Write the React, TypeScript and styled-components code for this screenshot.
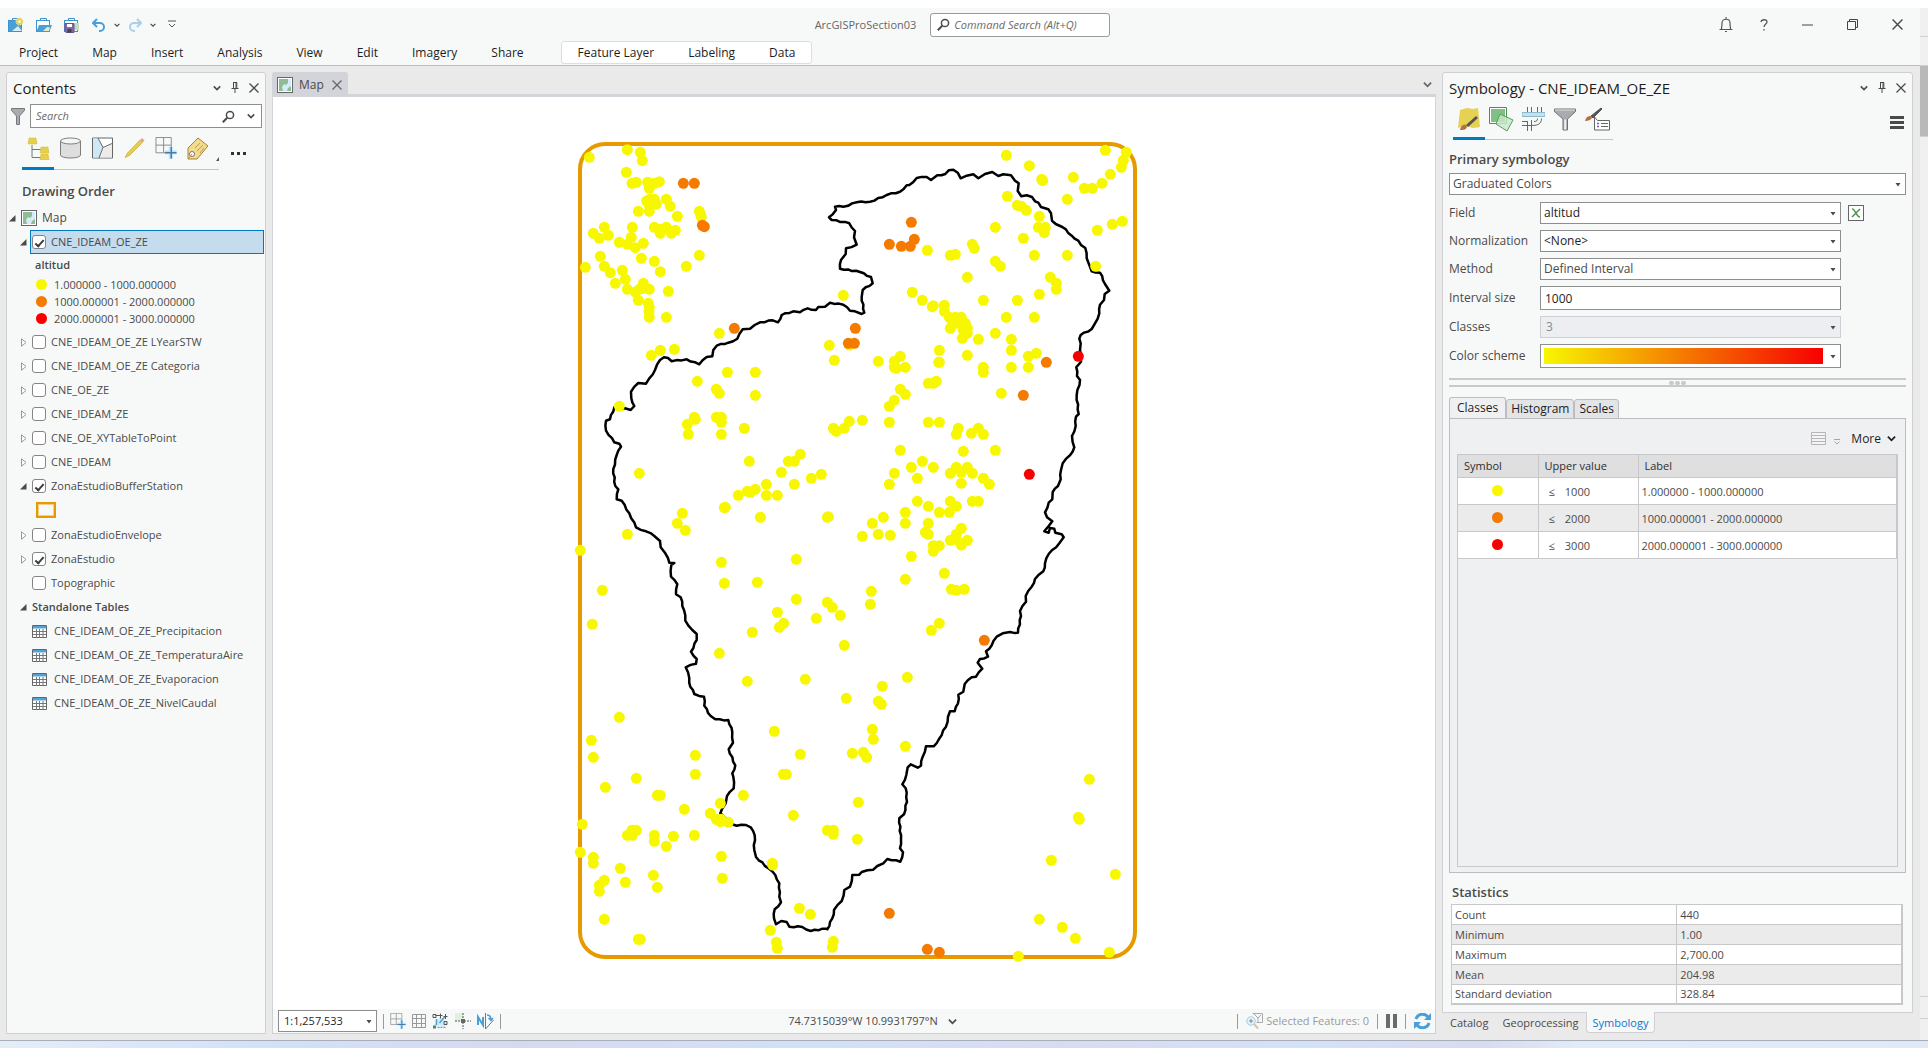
import React from "react";
import styled, { createGlobalStyle, css } from "styled-components";

const ink = "#4a4a4a";
const line = "#c8c8ca";
const panelBg = "#f7f9f8";
const blue = "#0079c1";

const GlobalStyle = createGlobalStyle`
  *, *::before, *::after { box-sizing: border-box; }
  body {
    margin: 0;
    background: #ffffff;
    color: ${ink};
    font: 12px/16px "Segoe UI", "Open Sans", "Noto Sans", sans-serif;
  }
  button, input, select { font: inherit; color: inherit; margin: 0; }
  button { background: none; border: 0; padding: 0; white-space: nowrap; }
  svg { display: block; flex: none; }
`;

/* ---------- frame ---------- */

const Page = styled.div`
  display: flex;
  flex-direction: column;
  height: 100vh;
  padding-top: 8px;
`;
const Screen = styled.div`
  flex: 1;
  min-height: 0;
  display: flex;
`;
const AppWindow = styled.div`
  flex: 1;
  min-width: 0;
  display: flex;
  flex-direction: column;
  background: #eaeaea;
`;
const Desktop = styled.div`
  height: 8px;
  border-top: 1px solid #a9adb8;
  background: linear-gradient(90deg, #e4eef8, #d2e0fa 14%, #d6daf0 27%, #d2e0fa 42%, #d8dcf2 55%, #d3e1f9 68%, #d8dbf0 77%, #e0ecf8 82%, #dfe9f8);
`;
const Behind = styled.div`
  width: 8px;
  display: flex;
  flex-direction: column;
  background: #f0f0f1;
`;
const BehindPart = styled.div<{ $h: number; $dark?: boolean }>`
  height: ${(p) => p.$h}px;
  border-bottom: 1px solid #d0d0d0;
  background: ${(p) => (p.$dark ? "#b9b9b9" : "#f0f0f1")};
`;
const TitleBar = styled.header`
  display: grid;
  grid-template-columns: 1fr auto 1fr;
  align-items: center;
  height: 33px;
  padding: 0 17px 0 8px;
  background: ${panelBg};
`;
const Cluster = styled.div<{ $gap: number; $end?: boolean; $lead?: number; $small?: boolean }>`
  display: flex;
  align-items: center;
  gap: ${(p) => p.$gap}px;
  padding-left: ${(p) => p.$lead ?? 0}px;
  font-size: ${(p) => (p.$small ? 11 : 12)}px;
  justify-content: ${(p) => (p.$end ? "flex-end" : "flex-start")};
`;
const ProjectName = styled.span`
  color: #666666;
`;
const CommandBox = styled.label`
  display: flex;
  align-items: center;
  gap: 4px;
  width: 180px;
  height: 24px;
  padding: 0 6px;
  background: #ffffff;
  border: 1px solid #9a9a9a;
  border-radius: 3px;
`;
const PlainInput = styled.input`
  flex: 1;
  min-width: 0;
  border: 0;
  padding: 0;
  background: transparent;
  &::placeholder { color: #6a6a6a; font-style: italic; opacity: 1; }
`;
const Ribbon = styled.nav`
  display: flex;
  height: 25px;
  padding-left: 19px;
  gap: 34px;
  background: ${panelBg};
  border-bottom: 1px solid #bdbdbd;
  color: #1e1e1e;
`;
const ContextTabs = styled.div`
  display: flex;
  gap: 34px;
  height: 23px;
  margin-left: 3px;
  padding: 0 16px;
  background: #ffffff;
  border: 1px solid #dedede;
  border-radius: 3px;
`;
const Workspace = styled.main`
  flex: 1;
  min-height: 0;
  display: flex;
  gap: 6px;
  padding: 6px 7px 6px 6px;
`;
const Column = styled.div<{ $w: number }>`
  width: ${(p) => p.$w}px;
  flex: none;
  display: flex;
  flex-direction: column;
`;
const Panel = styled.section`
  flex: 1;
  min-height: 0;
  display: flex;
  flex-direction: column;
  background: ${panelBg};
  border: 1px solid #d0d0d4;
  border-radius: 3px 3px 0 0;
`;
const PanelHead = styled.div`
  display: flex;
  align-items: center;
  height: 31px;
  padding: 0 6px 2px;
`;
const PanelTitle = styled.h2`
  flex: 1;
  margin: 0;
  font-size: 15px;
  line-height: 20px;
  font-weight: 400;
  color: #1e1e1e;
`;

/* ---------- contents ---------- */

const SearchRow = styled.div`
  display: flex;
  align-items: center;
  gap: 5px;
  padding: 0 3px 0 4px;
`;
const SearchBox = styled.label`
  flex: 1;
  min-width: 0;
  display: flex;
  align-items: center;
  gap: 12px;
  height: 24px;
  padding: 0 6px 0 5px;
  background: #ffffff;
  border: 1px solid #8e8e8e;
  font-size: 11px;
`;
const ToolStrip = styled.div<{ $top: number; $left: number; $w: number; $n: number }>`
  display: grid;
  grid-template-columns: repeat(${(p) => p.$n}, ${(p) => p.$w}px) auto;
  width: fit-content;
  margin: ${(p) => p.$top}px 0 0 ${(p) => p.$left}px;
`;
const Tool = styled.button<{ $on?: boolean }>`
  display: flex;
  justify-content: center;
  height: 33px;
  border-bottom: ${(p) => (p.$on ? `3px solid ${blue}` : "1px solid #c4c4c4")};
`;
const SectionTitle = styled.h3<{ $pad: string }>`
  margin: 0;
  padding: ${(p) => p.$pad};
  font-size: 13px;
  line-height: 18px;
  font-weight: 600;
`;
const TreeRow = styled.div<{ $indent: number; $gap: number }>`
  display: flex;
  align-items: center;
  height: 24px;
  margin-right: 1px;
  padding-left: ${(p) => p.$indent}px;
  gap: ${(p) => p.$gap}px;
`;
const TreeLabel = styled.label<{ $on?: boolean }>`
  flex: 1;
  display: flex;
  align-items: center;
  gap: 5px;
  height: 24px;
  padding: 0 1px;
  border: 1px solid ${(p) => (p.$on ? blue : "transparent")};
  background: ${(p) => (p.$on ? "#c5dbee" : "transparent")};
  font-size: 11px;
  white-space: nowrap;
`;
const Check = styled.input`
  appearance: none;
  flex: none;
  display: grid;
  place-items: center;
  width: 14px;
  height: 14px;
  background: #ffffff;
  border: 1px solid #858585;
  border-radius: 3px;
  &:checked::after {
    content: "";
    width: 9px;
    height: 5px;
    border: solid #3c3c3c;
    border-width: 0 0 2px 2px;
    transform: rotate(-48deg);
  }
`;
const FieldName = styled.div`
  padding: 3px 0 3px 28px;
  font-size: 11px;
  font-weight: 600;
`;
const Legend = styled.ul`
  list-style: none;
  margin: 0 0 3px;
  padding: 0 0 0 29px;
  font-size: 11px;
`;
const LegendItem = styled.li`
  display: flex;
  align-items: center;
  gap: 7px;
  height: 17px;
`;
const Dot = styled.i<{ $c: string }>`
  display: block;
  width: 11px;
  height: 11px;
  border-radius: 50%;
  background: ${(p) => p.$c};
`;
const PatchRow = styled.div`
  height: 25px;
  padding: 4px 0 0 29px;
`;
const Patch = styled.div`
  width: 20px;
  height: 16px;
  border: 2px solid #e69a00;
  outline: 1px solid #f3cf8a;
  outline-offset: -3px;
`;
const TableRow = styled.div`
  display: flex;
  align-items: center;
  gap: 7px;
  height: 24px;
  padding-left: 25px;
  font-size: 11px;
  white-space: nowrap;
`;
const GroupName = styled.span`
  font-size: 11px;
  font-weight: 600;
`;

/* ---------- map view ---------- */

const MapColumn = styled.section`
  flex: 1;
  min-width: 0;
  display: flex;
  flex-direction: column;
`;
const DocTabs = styled.div`
  display: flex;
  align-items: flex-start;
  justify-content: space-between;
  height: 25px;
  padding-right: 4px;
  border-bottom: 3px solid #d3d3da;
`;
const DocTab = styled.div`
  display: flex;
  align-items: center;
  gap: 6px;
  height: 25px;
  padding: 0 6px 0 5px;
  background: #d3d3da;
  border-radius: 3px 3px 0 0;
`;
const TabClose = styled.button`
  padding-left: 2px;
`;
const ChevronHolder = styled.div`
  padding-top: 8px;
`;
const Canvas = styled.div`
  flex: 1;
  min-height: 0;
  background: #ffffff;
  border: solid #d3d3da;
  border-width: 0 1px;
  & > svg { width: 100%; height: 100%; }
`;
const StatusBar = styled.div`
  display: grid;
  grid-template-columns: 1fr auto 1fr;
  align-items: center;
  height: 25px;
  padding: 0 4px 0 5px;
  background: ${panelBg};
  border: 1px solid #cfcfd2;
  border-top: 0;
`;
const Rule = styled.i`
  width: 1px;
  height: 15px;
  background: #9a9a9a;
`;
const Muted = styled.button`
  display: flex;
  align-items: center;
  gap: 3px;
  color: #9a9a9a;
`;

/* ---------- symbology ---------- */

const Picker = styled.div<{ $w?: number; $h?: number; $off?: boolean }>`
  display: grid;
  align-items: center;
  width: ${(p) => (p.$w ? `${p.$w}px` : "100%")};
  height: ${(p) => p.$h ?? 22}px;
  background: ${(p) => (p.$off ? "#edeef1" : "#ffffff")};
  border: 1px solid ${(p) => (p.$off ? "#cfcfd6" : "#8e8e8e")};
  & > * { grid-area: 1 / 1; }
  & > svg { justify-self: end; margin-right: 4px; pointer-events: none; }
`;
const Select = styled.select<{ $dark?: boolean }>`
  appearance: none;
  width: 100%;
  height: 18px;
  border: 0;
  padding: 0 16px 0 3px;
  background: transparent;
  color: ${(p) => (p.$dark ? "#1e1e1e" : ink)};
  opacity: 1;
  &:disabled { color: #8a8a8a; padding-left: 5px; }
`;
const ScaleSelect = styled(Select)`
  padding-left: 5px;
`;
const Ramp = styled.select`
  appearance: none;
  width: auto;
  height: 16px;
  margin: 0 17px 0 3px;
  border: 0;
  background: linear-gradient(90deg, #f7f700, #f57a00 50%, #f70000);
`;
const NumberBox = styled.input`
  height: 24px;
  padding: 0 4px;
  background: #ffffff;
  border: 1px solid #8e8e8e;
  color: #1e1e1e;
`;
const Body = styled.div`
  flex: 1;
  min-height: 0;
  display: flex;
  flex-direction: column;
  padding: 0 6px;
`;
const ToolLine = styled.div`
  display: flex;
  align-items: center;
  justify-content: space-between;
  padding: 0 2px 0 4px;
`;
const Fields = styled.div`
  display: grid;
  grid-template-columns: 84px 301px auto;
  grid-template-rows: 22px 22px 22px 24px 22px 24px;
  column-gap: 7px;
  row-gap: 6px;
  align-items: center;
  padding-top: 7px;
`;
const FieldLabel = styled.label`
  grid-column: 1;
  white-space: nowrap;
`;
const Expression = styled.button`
  width: 16px;
  height: 16px;
  background: #ffffff;
  border: 1px solid #666666;
`;
const Splitter = styled.div`
  display: flex;
  align-items: center;
  justify-content: center;
  gap: 1px;
  height: 9px;
  flex: none;
  margin: 10px 0;
  border: solid #c9c9c9;
  border-width: 2px 0;
`;
const Grip = styled.i`
  width: 5px;
  height: 4px;
  border-radius: 2px;
  background: #c9c9c9;
`;
const Tabs = styled.div`
  display: flex;
  align-items: flex-end;
  height: 22px;
  flex: none;
  margin-bottom: -1px;
`;
const Tab = styled.button<{ $on?: boolean }>`
  height: ${(p) => (p.$on ? 22 : 20)}px;
  padding: 0 ${(p) => (p.$on ? 7 : 4)}px;
  color: #1e1e1e;
  background: ${(p) => (p.$on ? "#eff0f2" : "#e3e4e6")};
  border: 1px solid #bcbcc2;
  border-bottom-color: ${(p) => (p.$on ? "#eff0f2" : "#bcbcc2")};
  border-radius: 3px 3px 0 0;
`;
const TabPage = styled.div`
  flex: 1;
  min-height: 0;
  display: flex;
  flex-direction: column;
  padding: 0 7px 5px;
  background: #eff0f2;
  border: 1px solid #bcbcc2;
`;
const MoreRow = styled.div`
  display: flex;
  align-items: center;
  justify-content: flex-end;
  gap: 8px;
  height: 35px;
  flex: none;
  padding: 4px 2px 0 0;
`;
const MoreButton = styled.button`
  display: flex;
  align-items: center;
  gap: 6px;
  margin-left: 3px;
  color: #1e1e1e;
`;
const GridFrame = styled.div`
  flex: 1;
  min-height: 0;
  border: 1px solid ${line};
`;
const tableBase = css`
  width: 100%;
  border-collapse: collapse;
  table-layout: fixed;
  font-size: 11px;
  line-height: 16px;
  background: #ffffff;
  th, td { text-align: left; font-weight: 400; white-space: nowrap; border: 1px solid ${line}; }
  tbody tr:nth-child(even) { background: #ebebeb; }
`;
const ClassTable = styled.table`
  ${tableBase}
  thead th { height: 22px; padding: 0 6px; background: #dfdfdf; color: #2e2e2e; }
  tbody td { height: 27px; padding: 2px 3px 0; }
  tbody td:nth-child(1) { padding: 0; }
  tbody td:nth-child(2) { padding-left: 10px; }
  tr > *:first-child { border-left: 0; }
  thead th { border-top: 0; }
`;
const ColumnSize = styled.col<{ $w: number }>`
  width: ${(p) => p.$w}px;
`;
const SymbolCell = styled.div`
  display: grid;
  place-items: center;
`;
const Limit = styled.span`
  display: flex;
  gap: 10px;
`;
const Stats = styled.table`
  ${tableBase}
  margin: 0 2px 7px;
  width: calc(100% - 5px);
  border: 1px solid ${line};
  border-width: 1px 2px 2px 1px;
  th, td { height: 20px; padding: 0 3px; line-height: 15px; }
`;
const DockTabs = styled.div`
  display: flex;
  height: 21px;
  padding-left: 1px;
`;
const DockTab = styled.button<{ $on?: boolean }>`
  height: 21px;
  margin-top: -1px;
  padding: 1px 6px 0;
  font-size: 11px;
  color: ${(p) => (p.$on ? "#0a76d0" : ink)};
  background: ${(p) => (p.$on ? panelBg : "transparent")};
  border: 1px solid ${(p) => (p.$on ? "#d0d0d4" : "transparent")};
  border-top: 0;
  border-radius: 0 0 4px 4px;
`;

/* ---------- icons ---------- */

const Chevron = ({ s = 9, c = "#4a4a4a", w = 2 }: { s?: number; c?: string; w?: number }) => (
  <svg width={s} height={s} viewBox="0 0 10 10" fill="none" stroke={c} strokeWidth={w}><path d="M1 3l4 4 4-4" /></svg>
);
const DropArrow = () => (
  <svg width="6" height="5" viewBox="0 0 6 5"><path d="M.5 1h5L3 4.500z" fill="#4a4a4a" /></svg>
);
const Close = ({ s = 10, c = "#4a4a4a" }: { s?: number; c?: string }) => (
  <svg width={s} height={s} viewBox="0 0 10 10" stroke={c} strokeWidth="1.300"><path d="M.5.5l9 9M9.500.5l-9 9" /></svg>
);
const Pin = () => (
  <svg width="8" height="11" viewBox="0 0 8 11" fill="none" stroke="#4a4a4a"><path d="M2 .5h4M2.500.5v6M5 .5v6M5.800.5v6M.5 6.500h7M4 7v4" /></svg>
);
const Magnifier = () => (
  <svg width="13" height="13" viewBox="0 0 13 13" fill="none" stroke="#4a4a4a" strokeWidth="1.500"><circle cx="8" cy="5" r="3.600" /><path d="M5.200 7.800L.8 12.200" strokeWidth="2" /></svg>
);
const Funnel = ({ s }: { s: number }) => (
  <svg width={s} height={s} viewBox="0 0 24 24"><path d="M1.500 2h21v2.500L14.500 12v11h-4.500V12L1.500 4.500z" fill="#a9abb0" stroke="#6e7074" /><path d="M2 3h20" stroke="#e0e0e0" /><path d="M12.200 12.500v10" stroke="#f0f0f0" strokeWidth="2" /></svg>
);
const FilterGlyph = () => (
  <svg width="14" height="17" viewBox="0 0 14 17"><path d="M.5.5h13v2L8.500 8v8.500h-3V8L.5 2.500z" fill="#a9abb0" stroke="#77797d" /></svg>
);
const MapGlyph = () => (
  <svg width="16" height="16" viewBox="0 0 16 16"><rect x=".5" y=".5" width="15" height="15" fill="#fff" stroke="#666" /><path d="M2 2h12v12H2z" fill="#d5ebf7" /><path d="M2 2h9v4L9 8 7 7l-2 3 1 4H2zM14 9v5h-4l1-3z" fill="#8fbc94" /></svg>
);
const Folder = ({ kind }: { kind: "new" | "open" | "save" }) => (
  <svg width="16" height="16" viewBox="0 0 16 16">
    <path d="M4.500 3.500v-2h6v2" fill="none" stroke="#3f93cc" />
    <rect x=".5" y="3.500" width="13" height="11" fill={kind === "new" ? "#4a9fd8" : "#fff"} stroke="#3f93cc" />
    {kind === "new" && <><path d="M4 14l6-5 4 5z" fill="#d5ebf7" /><circle cx="11.500" cy="4.500" r="3.600" fill="#e8cf5c" stroke="#f4e9b0" strokeDasharray="1 1" /><circle cx="11.500" cy="4.500" r="1.500" fill="#fff3b0" /></>}
    {kind === "open" && <path d="M3 8h13l-2.500 6.500H.5z" fill="#4a9fd8" />}
    {kind === "open" && <path d="M7 14l4-4 3 .5-1 3.500z" fill="#dcecc8" />}
    {kind === "save" && <><rect x="9" y="6" width="6" height="7" fill="#bfdfbf" /><path d="M1 6.500h9v9H2L1 14z" fill="#8467a8" stroke="#6d5491" /><path d="M3 7h5v3H3z" fill="#fff" /><path d="M3.500 12h4v3.500h-4z" fill="#444" /></>}
  </svg>
);
const Undo = ({ flip }: { flip?: boolean }) => (
  <svg width="14" height="14" viewBox="0 0 14 14" fill="none" stroke={flip ? "#a9d0ea" : "#4a9fd8"} strokeWidth="2"><path d={flip ? "M9 1l4 4-4 4M13 5H6a4 4 0 0 0 0 8h1" : "M5 1L1 5l4 4M1 5h7a4 4 0 0 1 0 8H7"} /></svg>
);
const Customize = () => (
  <svg width="8" height="9" viewBox="0 0 8 9" fill="none" stroke="#555"><path d="M0 1h8M1 4l3 3 3-3" /></svg>
);
const AddGrid = ({ s }: { s: number }) => (
  <svg width={s} height={s} viewBox="0 0 22 23" fill="none"><path d="M.5.5h16v16H.5zM8.500.5v16M.5 8.500h16" stroke="#888" /><path d="M10 16h12M16 10v13" stroke="#bfe0f5" strokeWidth="4" /><path d="M10 16.500h12M16.500 10.500v12" stroke="#3c7fb0" strokeWidth="1.500" /></svg>
);
const TableGlyph = () => (
  <svg width="15" height="13" viewBox="0 0 15 13"><path d="M.5.5h14v12H.5z" fill="#fff" stroke="#666" /><path d="M1 1h13v2.500H1z" fill="#4fa3dc" /><path d="M1 6.500h13M1 9.500h13M4.500 4v9M7.500 4v9M11 4v9" stroke="#777" /></svg>
);
const TreeArrow = ({ open }: { open?: boolean }) =>
  open ? (
    <svg width="7" height="7" viewBox="0 0 7 7"><path d="M6.500 0v6.500H0z" fill="#4a4a4a" /></svg>
  ) : (
    <svg width="7" height="9" viewBox="0 0 7 9"><path d="M1.500.8v7.400L6 4.500z" fill="#fff" stroke="#999" /></svg>
  );
const Ellipsis = () => (
  <svg width="15" height="3" viewBox="0 0 15 3" fill="#333"><path d="M0 0h3v3H0zM6 0h3v3H6zM12 0h3v3h-3z" /></svg>
);
const contentTools = [
  <svg key="a" width="23" height="23" viewBox="0 0 23 23"><path d="M5 8v12.500h9M5 12.500h9" fill="none" stroke="#777" /><path d="M2 1h7l1 6H1zM14 10h7l1 6h-9zM14 17h7l1 6h-9z" fill="#e6d04b" stroke="#cdb83c" strokeWidth=".5" /></svg>,
  <svg key="b" width="21" height="22" viewBox="0 0 21 22" fill="#dedede" stroke="#7d7d7d"><path d="M.5 4v14c0 4 20 4 20 0V4" /><ellipse cx="10.500" cy="4" rx="10" ry="3" fill="#f5f5f5" /></svg>,
  <svg key="c" width="21" height="22" viewBox="0 0 21 22"><path d="M.5 1h20v20H.5z" fill="#fff" stroke="#666" /><path d="M1 1.500h5l5 9-4 10H1z" fill="#cfe8f7" /><path d="M12 11l8-4v13.500H8z" fill="#ececec" /><path d="M6 1l5 9.500 9-4M11 10.500L7 21" fill="none" stroke="#666" /></svg>,
  <svg key="d" width="21" height="22" viewBox="0 0 21 22"><path d="M1 20.500L3.500 16 16 3l2.500 2.500L5.500 18.500z" fill="#e6cf45" stroke="#b8a030" strokeWidth=".6" /><path d="M16 3l2-2 2.500 2.500-2 2z" fill="#e9a090" /></svg>,
  <AddGrid key="e" s={22} />,
  <svg key="f" width="22" height="23" viewBox="0 0 22 23"><path d="M11 1l10 8L10 22H1V11z" fill="#f1dc8c" stroke="#b07d3a" /><circle cx="5" cy="17" r="2.500" fill="#fff" stroke="#777" /><path d="M5 17l-4 5M8 11l5-5M10 14l6-6M13 16l4-5" fill="none" stroke="#c09a5a" /></svg>,
];
const symbologyTools = [
  <svg key="a" width="24" height="24" viewBox="0 0 24 24"><path d="M3 3l7-2 6 1 5-1 2 19-7 1-8-2-7 2z" fill="#e5d152" /><path d="M19 9l2 2-10 9-2-2z" fill="#555" /><path d="M3 23c1-5 4-6 6-5l1 2c-1 3-4 3-7 3z" fill="#b07040" /></svg>,
  <svg key="b" width="25" height="25" viewBox="0 0 25 25"><path d="M.5.5h17v16H.5z" fill="#fff" stroke="#4d8f52" /><path d="M2 2h14v13H2z" fill="#7fc184" /><path d="M11 7l13 6-6 11-11-7z" fill="#c7e8c9" fillOpacity=".8" stroke="#5b9b60" /></svg>,
  <svg key="c" width="23" height="24" viewBox="0 0 23 24" fill="none" stroke="#666"><path d="M5.500 0v6M9.500 0v6M15.500 0v6M19.500 0v6M0 14.500h5.500V24M0 18.500h9.500M9.500 24V13M5.500 14v10M9.500 18.500c7 0 10-2 10-7M12 14.500c3 0 3.500-1 3.500-3" /><path d="M0 5.500h23v4H0z" fill="#bfe3f2" stroke="#8fb8c9" /></svg>,
  <Funnel key="d" s={24} />,
  <svg key="e" width="25" height="24" viewBox="0 0 25 24"><path d="M16 1l1 1-9 9-2-2z" fill="#555" stroke="#555" /><path d="M0 14c1-4 3-5 6-5l1 2c-1 2-4 3-7 3z" fill="#b07040" /><path d="M9.500 10v13h15V13.500h-12z" fill="#fff" stroke="#666" /><path d="M12 16.500h2M12 19.500h2" stroke="#7a5aa8" strokeWidth="1.500" /><path d="M16 16.500h7M16 19.500h7" stroke="#666" /></svg>,
];

/* ---------- map data: sheets digitised at three units to the pixel ---------- */

type Sheet = { ox: number; oy: number; yellow: string; orange: string; red: string };
const sheets: Sheet[] = [
  {
    ox: 560, oy: 130,
    yellow: "88,82 202,59 241,67 247,92 199,127 216,160 229,157 263,157 268,175 283,160 298,155 268,168 260,213 283,208 289,222 269,208 268,226 319,208 331,229 235,244 268,244 352,259 418,244 424,262 422,254 133,292 100,310 118,325 145,316 217,292 214,322 178,337 202,343 226,353 250,340 283,292 301,310 319,292 334,310 346,301 300,298 121,379 244,385 283,394 418,376 379,409 301,425 76,412 133,409 151,428 187,421 196,448 166,460 202,478 226,486 250,460 268,478 238,478 250,475 325,484 235,511 265,520 268,532 267,545 268,562 319,562 478,610 274,676 301,661 343,658 502,727 586,727 412,754 469,778 478,790 586,796 178,829 403,862 406,868 382,883 385,913 469,862 484,862 484,877 484,913 553,895 568,994 685,994 703,994 721,973 664,1027 238,1030 703,1063 754,1045 619,1063 535,1096 562,1084 571,1087 586,1078 619,1096 652,1096 496,1132 493,1133 367,1150 352,1180 376,1201 601,1162 202,1213",
    orange: "370,160 403,160 427,286 433,290 523,595",
    red: "",
  },
  {
    ox: 820, oy: 130,
    yellow: "559,76 628,107 856,61 919,67 910,91 904,112 871,133 846,160 817,175 793,175 760,142 742,208 665,148 668,152 562,199 592,226 604,229 619,241 658,259 655,292 676,292 673,308 526,292 610,325 832,301 877,283 907,274 322,361 391,376 406,373 457,343 463,355 643,376 742,376 827,409 526,394 541,409 442,442 691,442 709,460 709,478 658,493 277,487 307,511 337,530 340,527 373,526 373,544 490,511 592,511 388,562 406,562 424,562 394,568 436,580 415,580 442,595 391,595 430,600 442,610 427,625 559,562 643,562 475,628 526,610 574,628 70,496 28,646 88,645 43,691 175,694 241,679 223,694 223,712 229,715 256,712 358,661 358,697 356,697 442,676 574,661 625,679 649,670 574,712 625,712 490,712 490,727 325,760 340,760 349,754 241,778 256,793 223,811 208,829 544,790 208,877 127,871 88,874 40,895 49,904 73,895 325,877 358,877 415,895 409,913 454,910 475,895 490,913 526,961 430,964 241,961 307,994 274,1012 340,1012 223,1030 292,1045 208,1063 4,1033 409,1012 442,1012 391,1030 424,1027 457,1030 424,1060 490,1045 508,1063 292,1114 325,1129 391,1114 409,1129 457,1114 475,1114 358,1147 388,1147 256,1147 256,1180 190,1162 157,1180 175,1213 211,1216 127,1219 22,1162 25,1160 325,1180 316,1207 325,1213 424,1195 409,1213 391,1231 409,1229 442,1231 340,1247 358,1247 424,1245",
    orange: "274,277 208,343 244,349 271,349 283,328 106,595 85,640 103,640 679,697 610,796",
    red: "775,679 628,1033",
  },
  {
    ox: 560, oy: 540,
    yellow: "61,31 127,151 97,253 484,67 493,130 592,127 709,58 709,178 652,217 671,250 658,262 577,277 769,235 478,340 562,424 736,418 178,532 94,601 100,652 406,646 406,703 643,574 721,643 670,703 679,703 229,715 136,742 292,766 301,766 550,766 481,790 373,808 451,820 469,838 484,838 481,845 505,847 67,853 700,826 216,871 229,871 202,886 217,886 283,886 283,904 340,889 319,919 403,886 61,937 100,952 100,970 181,985 133,1021 118,1036 118,1054 196,1027 280,1006 292,1042 484,949 487,1015 637,970 638,975 133,1138 235,1198 241,1198 718,1105 751,1123 631,1171 649,1207 652,1225",
    orange: "",
    red: "",
  },
  {
    ox: 820, oy: 540,
    yellow: "274,49 373,100 256,118 340,34 154,154 151,193 22,187 37,202 61,226 394,148 409,151 433,148 358,250 334,271 73,316 262,412 187,439 79,475 175,484 184,493 157,568 160,598 97,640 130,637 140,652 256,619 808,718 775,832 778,838 115,787 22,871 40,871 40,883 112,898 694,961 886,1003 658,1138 727,1162 766,1195 868,1237 595,1249 40,1204 37,1222",
    orange: "493,301 208,1120 322,1228 358,1237",
    red: "",
  },
];
const border: [number, number, string][] = [
  [820, 130, "45,230 70,230 110,217 150,215 200,195 240,185 260,166 268,165 290,144 320,141 333,150 352,136 376,132 386,121 400,119 413,128 422,145 440,137 460,133 475,145 495,132 517,126 535,138 550,133 573,136 585,152 596,160 593,183 604,199 620,196 636,201 645,214 655,218 663,231 685,238 693,250 696,272 707,282 727,291 755,317 775,332 783,345 796,354 800,385 808,405 815,424 840,428 855,462 868,482 854,492 852,510 840,524 838,550 825,580 815,597 782,615 778,626 782,640 780,660 783,695 769,712 771,738 780,750 770,795 776,852 768,860 767,888 756,918 763,952 750,976 728,1000 723,1020 722,1048 714,1068 698,1086 697,1108 686,1118 675,1147 681,1162 697,1174 686,1188 673,1204 686,1208 690,1194 703,1196 706,1208 725,1213 731,1222 718,1240"],
  [820, 540, "686,42 675,70 670,94 645,117 635,140 617,168 618,185 600,213 603,228 594,278 570,276 548,280 530,290 515,316 498,334 504,350 480,357 473,368 487,386 468,410 455,412 434,432 430,455 415,464 414,490 404,514 390,514 384,530 378,560 357,597 341,619 318,619 308,650 303,677 293,683 272,673 263,682 259,705 247,733 257,745 261,785 252,823 238,835 243,898 240,925 249,937 241,965 202,957 190,970 172,978 160,989 125,996 118,1004 97,1005 90,1040 73,1050 65,1083 42,1110 37,1135 22,1168"],
  [560, 540, "800,1166 752,1173 727,1161 688,1160 680,1146 664,1143 648,1153 642,1135 644,1108 663,1087 658,1070 658,1030 646,1005 625,985 588,951 583,930 584,886 572,862 558,855 530,857 505,845 481,820 497,790 501,768 521,745 520,710 517,700 526,676 506,628 519,608 517,577 505,540 466,538 452,528 433,497 432,470 403,462 391,440 388,415 377,382 408,371 410,357 393,335 410,300 410,282 397,270 376,242 372,210 362,172 348,163 352,133 333,110 334,75 343,69 328,68 316,40 302,22 300,3"],
  [560, 130, "283,1218 258,1204 228,1192 208,1150 185,1112 170,1108 175,1078 166,1068 160,1017 170,975 183,950 178,941 163,937 138,902 138,872 150,868 163,832 195,835 212,840 223,828 214,805 213,785 235,759 258,761 268,745 285,720 300,690 312,682 324,684 335,694 380,688 418,703 440,681 457,679 460,660 470,647 505,638 532,626 548,598 570,596 600,577 638,571 654,577 665,555 700,544 720,547 743,535 768,540 775,531 795,530 810,518 850,524 870,542 885,544 905,552 913,548 905,500 908,480 938,460 933,441 900,426 840,416 843,390 857,372 858,355 890,344 882,322 885,303 868,280 815,270 807,262 828,240"],
];

const toPoints = (ox: number, oy: number, s: string) =>
  s.split(" ").filter(Boolean).map((p) => {
    const [x, y] = p.split(",").map(Number);
    return [ox + x / 3, oy + y / 3];
  });
const colors = { yellow: "#f7f700", orange: "#f57a00", red: "#f70000" };

const outline = () => {
  const pts = border.flatMap(([ox, oy, s]) => toPoints(ox, oy, s));
  return pts
    .map(([x, y], i) => {
      const [nx, ny] = pts[(i + 1) % pts.length];
      const len = Math.hypot(nx - x, ny - y);
      const out = [`${x.toFixed(1)},${y.toFixed(1)}`];
      const n = Math.floor(len / 4);
      for (let k = 1; k < n; k++) {
        const t = k / n;
        const a = (k % 2 ? 0.6 : -0.4) * (i % 2 ? 1 : -1);
        out.push(`${(x + (nx - x) * t - ((ny - y) / len) * a).toFixed(1)},${(y + (ny - y) * t + ((nx - x) / len) * a).toFixed(1)}`);
      }
      return out.join(" ");
    })
    .join(" ");
};

const StationMap = () => (
  <svg viewBox="273 97 1162 912" role="img" aria-label="Map of stations">
    <rect x="580" y="144" width="555" height="813" rx="25" fill="none" stroke="#e69a00" strokeWidth="4" />
    <polygon points={outline()} fill="none" stroke="#000" strokeWidth="2.500" strokeLinejoin="round" />
    {(["yellow", "orange", "red"] as const).map((k) => (
      <g key={k} fill={colors[k]}>
        {sheets.flatMap((s) => toPoints(s.ox, s.oy, s[k])).map(([x, y], i) => <circle key={i} cx={x} cy={y} r="5.500" />)}
      </g>
    ))}
  </svg>
);

/* ---------- data ---------- */

const classes = [
  { color: colors.yellow, upper: "1000", label: "1.000000 - 1000.000000" },
  { color: colors.orange, upper: "2000", label: "1000.000001 - 2000.000000" },
  { color: colors.red, upper: "3000", label: "2000.000001 - 3000.000000" },
];
const stats = [["Count", "440"], ["Minimum", "1.00"], ["Maximum", "2,700.00"], ["Mean", "204.98"], ["Standard deviation", "328.84"]];

const Layer = ({ name, open, on, leaf, selected }: { name: string; open?: boolean; on?: boolean; leaf?: boolean; selected?: boolean }) => (
  <TreeRow $indent={leaf ? 23 : 13} $gap={3}>
    {!leaf && <TreeArrow open={open} />}
    <TreeLabel $on={selected}>
      <Check type="checkbox" defaultChecked={on} />
      {name}
    </TreeLabel>
  </TreeRow>
);

const PanelButtons = () => (
  <Cluster $gap={10}>
    <button aria-label="Options"><Chevron s={8} w={2} /></button>
    <button aria-label="Auto hide"><Pin /></button>
    <button aria-label="Close"><Close /></button>
  </Cluster>
);

const Contents = () => (
  <Column $w={260}>
    <Panel>
      <PanelHead><PanelTitle>Contents</PanelTitle><PanelButtons /></PanelHead>
      <SearchRow>
        <FilterGlyph />
        <SearchBox>
          <PlainInput placeholder="Search" aria-label="Search" />
          <Magnifier />
          <Chevron s={8} />
        </SearchBox>
      </SearchRow>
      <ToolStrip $top={9} $left={15} $w={32} $n={6}>
        {contentTools.map((icon, i) => <Tool key={i} $on={i === 0} aria-label={`List ${i + 1}`}>{icon}</Tool>)}
        <Cluster $gap={12}>
          <svg width="5" height="33" viewBox="0 0 5 33"><path d="M5 20v4H2z" fill="#555" /><path d="M0 32.500h5" stroke="#c4c4c4" /></svg>
          <Ellipsis />
        </Cluster>
      </ToolStrip>
      <SectionTitle $pad="12px 0 6px 15px">Drawing Order</SectionTitle>
      <TreeRow $indent={2} $gap={5}><TreeArrow open /><MapGlyph />Map</TreeRow>
      <Layer name="CNE_IDEAM_OE_ZE" open on selected />
      <FieldName>altitud</FieldName>
      <Legend>
        {classes.map((c) => <LegendItem key={c.upper}><Dot $c={c.color} />{c.label}</LegendItem>)}
      </Legend>
      {["CNE_IDEAM_OE_ZE LYearSTW", "CNE_IDEAM_OE_ZE Categoria", "CNE_OE_ZE", "CNE_IDEAM_ZE", "CNE_OE_XYTableToPoint", "CNE_IDEAM"].map((n) => <Layer key={n} name={n} />)}
      <Layer name="ZonaEstudioBufferStation" open on />
      <PatchRow><Patch /></PatchRow>
      <Layer name="ZonaEstudioEnvelope" />
      <Layer name="ZonaEstudio" on />
      <Layer name="Topographic" leaf />
      <TreeRow $indent={13} $gap={5}><TreeArrow open /><GroupName>Standalone Tables</GroupName></TreeRow>
      {["Precipitacion", "TemperaturaAire", "Evaporacion", "NivelCaudal"].map((n) => (
        <TableRow key={n}><TableGlyph />CNE_IDEAM_OE_ZE_{n}</TableRow>
      ))}
    </Panel>
  </Column>
);

const MapView = () => (
  <MapColumn>
    <DocTabs>
      <DocTab><MapGlyph />Map<TabClose aria-label="Close map"><Close c="#666" /></TabClose></DocTab>
      <ChevronHolder><Chevron s={9} c="#666" /></ChevronHolder>
    </DocTabs>
    <Canvas><StationMap /></Canvas>
    <StatusBar>
      <Cluster $gap={6} $small>
        <Picker $w={99}>
          <ScaleSelect $dark aria-label="Scale"><option>1:1,257,533</option></ScaleSelect>
          <DropArrow />
        </Picker>
        <Rule />
        <AddGrid s={16} />
        <svg width="14" height="14" viewBox="0 0 14 14" fill="none" stroke="#999"><path d="M.5.5h13v13H.5zM4.500 0v14M9.500 0v14M0 4.500h14M0 9.500h14" /></svg>
        <svg width="17" height="16" viewBox="0 0 16 16" fill="none"><path d="M1 13l6-9 5 2 3 5-2 3H4z" fill="#d5ebf7" /><path d="M3 2.500h7M8 .5v5M13 1v5M11 3.500h4" stroke="#555" /><path d="M7 10l5-6M4 12V6" stroke="#4a9fd8" strokeWidth="1.500" /><path d="M.5 1.500h3v3h-3zM11.500 8.500h3v3h-3z" stroke="#555" /><path d="M.5 12.500h3v3h-3z" fill="#4d8f52" /><path d="M5 14.500h9" stroke="#4a9fd8" strokeDasharray="2 1" /></svg>
        <svg width="16" height="16" viewBox="0 0 16 16" fill="none"><path d="M0 0h8v8H0z" fill="#dff0dc" /><path d="M8 0v16M0 8h16" stroke="#555" strokeDasharray="2 1" /><path d="M6 6h4v4H6z" fill="#666" /></svg>
        <svg width="17" height="16" viewBox="0 0 17 16" fill="none"><path d="M1 12V4l5 8V4" stroke="#4a9fd8" strokeWidth="2" /><path d="M8.500 0v16l8-9" stroke="#777" /><path d="M10 2c3 0 4 2 4 5M11.500 5l2.500 2.500L16 5" stroke="#4a9fd8" strokeWidth="1.500" /></svg>
        <Rule />
      </Cluster>
      <Cluster $gap={10} $lead={36} $small>74.7315039°W 10.9931797°N<Chevron s={9} /></Cluster>
      <Cluster $gap={8} $end $small>
        <Rule />
        <Muted>
          <svg width="17" height="16" viewBox="0 0 17 16" fill="none"><path d="M6.500.5h10v9h-6" stroke="#aaa" /><path d="M8 1l4 4 3-3M12 5v4" stroke="#aaa" /><circle cx="5" cy="8" r="4.200" fill="#e6f3fb" stroke="#9ccbe8" /><path d="M3 8h4M5 6v4" stroke="#888" /><path d="M8 11l4 4.500" stroke="#d9c3a0" strokeWidth="2" /></svg>
          Selected Features: 0
        </Muted>
        <Rule />
        <svg width="11" height="14" viewBox="0 0 11 14" fill="#6a6a6a"><path d="M0 0h4v14H0zM7 0h4v14H7z" /></svg>
        <Rule />
        <svg width="17" height="16" viewBox="0 0 17 16" fill="none" stroke="#4a9fd8" strokeWidth="3"><path d="M2 6c2-6 9-6 12-2M15 10c-2 6-9 6-12 2" /><path d="M17 0v7h-7zM0 16V9h7z" fill="#4a9fd8" stroke="none" /></svg>
      </Cluster>
    </StatusBar>
  </MapColumn>
);

const Field = ({ id, label, value, dark, off }: { id: string; label: string; value: string; dark?: boolean; off?: boolean }) => (
  <>
    <FieldLabel htmlFor={id}>{label}</FieldLabel>
    <Picker $off={off}>
      <Select id={id} $dark={dark} disabled={off}><option>{value}</option></Select>
      <DropArrow />
    </Picker>
  </>
);

const Symbology = () => (
  <Column $w={471}>
    <Panel>
      <PanelHead><PanelTitle>Symbology - CNE_IDEAM_OE_ZE</PanelTitle><PanelButtons /></PanelHead>
      <Body>
        <ToolLine>
          <ToolStrip $top={3} $left={0} $w={32} $n={5}>
            {symbologyTools.map((icon, i) => <Tool key={i} $on={i === 0} aria-label={`Symbology view ${i + 1}`}>{icon}</Tool>)}
          </ToolStrip>
          <button aria-label="Menu">
            <svg width="14" height="13" viewBox="0 0 14 13" fill="#4a4a4a"><path d="M0 0h14v3H0zM0 5h14v3H0zM0 10h14v3H0z" /></svg>
          </button>
        </ToolLine>
        <SectionTitle $pad="10px 0 5px"><label htmlFor="primary">Primary symbology</label></SectionTitle>
        <Picker>
          <Select id="primary"><option>Graduated Colors</option></Select>
          <DropArrow />
        </Picker>
        <Fields>
          <Field id="field" label="Field" value="altitud" dark />
          <Expression aria-label="Set an expression">
            <svg width="14" height="14" viewBox="0 0 14 14" fill="none" stroke="#4d9653" strokeWidth="1.500"><path d="M3 3c3-1 4 8 8 8M11 3L3 11" /></svg>
          </Expression>
          <Field id="norm" label="Normalization" value="<None>" dark />
          <Field id="method" label="Method" value="Defined Interval" />
          <FieldLabel htmlFor="size">Interval size</FieldLabel>
          <NumberBox id="size" defaultValue="1000" />
          <Field id="classes" label="Classes" value="3" off />
          <FieldLabel htmlFor="scheme">Color scheme</FieldLabel>
          <Picker $h={24}>
            <Ramp id="scheme"><option aria-label="Yellow to red" /></Ramp>
            <DropArrow />
          </Picker>
        </Fields>
        <Splitter><Grip /><Grip /><Grip /></Splitter>
        <Tabs><Tab $on>Classes</Tab><Tab>Histogram</Tab><Tab>Scales</Tab></Tabs>
        <TabPage>
          <MoreRow>
            <svg width="15" height="13" viewBox="0 0 15 13" fill="#f4f4f4" stroke="#b5b5b8"><path d="M.5.5h14v12H.5zM1 3.500h13M1 6.500h13M1 9.500h13" /></svg>
            <svg width="6" height="12" viewBox="0 0 6 12" fill="none" stroke="#a5a5a8"><path d="M0 6.500h6M.5 8.500L3 11l2.500-2.500" /></svg>
            <MoreButton>More<Chevron s={9} c="#1e1e1e" /></MoreButton>
          </MoreRow>
          <GridFrame>
            <ClassTable>
              <colgroup><ColumnSize $w={80} /><ColumnSize $w={100} /><col /></colgroup>
              <thead><tr><th>Symbol</th><th>Upper value</th><th>Label</th></tr></thead>
              <tbody>
                {classes.map((c) => (
                  <tr key={c.upper}>
                    <td><SymbolCell><Dot $c={c.color} /></SymbolCell></td>
                    <td><Limit><span>≤</span><span>{c.upper}</span></Limit></td>
                    <td>{c.label}</td>
                  </tr>
                ))}
              </tbody>
            </ClassTable>
          </GridFrame>
        </TabPage>
        <SectionTitle $pad="10px 3px 3px">Statistics</SectionTitle>
        <Stats>
          <tbody>{stats.map(([k, v]) => <tr key={k}><th scope="row">{k}</th><td>{v}</td></tr>)}</tbody>
        </Stats>
      </Body>
    </Panel>
    <DockTabs><DockTab>Catalog</DockTab><DockTab>Geoprocessing</DockTab><DockTab $on>Symbology</DockTab></DockTabs>
  </Column>
);

export default function App() {
  return (
    <Page>
      <GlobalStyle />
      <Screen>
        <AppWindow>
          <TitleBar>
            <Cluster $gap={12}>
              <button aria-label="New project"><Folder kind="new" /></button>
              <button aria-label="Open project"><Folder kind="open" /></button>
              <button aria-label="Save project"><Folder kind="save" /></button>
              <Cluster $gap={8}>
                <button aria-label="Undo"><Undo /></button>
                <Chevron s={6} w={2} />
                <button aria-label="Redo"><Undo flip /></button>
                <Chevron s={6} w={2} />
              </Cluster>
              <button aria-label="Customize"><Customize /></button>
            </Cluster>
            <Cluster $gap={14} $lead={14} $small>
              <ProjectName>ArcGISProSection03</ProjectName>
              <CommandBox><Magnifier /><PlainInput placeholder="Command Search (Alt+Q)" aria-label="Command Search" /></CommandBox>
            </Cluster>
            <Cluster $gap={34} $end>
              <Cluster $gap={27}>
                <button aria-label="Notifications"><svg width="14" height="16" viewBox="0 0 14 16" fill="none" stroke="#555" strokeWidth="1.200"><path d="M7 0v2M.5 12.500h13M2.500 12c0-2 .5-2 .5-6 0-5 8-5 8 0 0 4 .5 4 .5 6M6 14.500h2" /></svg></button>
                <button aria-label="Help"><svg width="8" height="12" viewBox="0 0 8 12" fill="none" stroke="#555" strokeWidth="1.300"><path d="M1 3c0-3 6-3 6 0 0 2-3 2-3 5M4 10v1.500" /></svg></button>
              </Cluster>
              <button aria-label="Minimize"><svg width="11" height="2" viewBox="0 0 11 2"><path d="M0 1h11" stroke="#444" /></svg></button>
              <button aria-label="Restore"><svg width="11" height="11" viewBox="0 0 11 11" fill="none" stroke="#444"><path d="M.5 2.500h8v8h-8zM2.500 2V.5h8v8H9" /></svg></button>
              <button aria-label="Close window"><Close s={11} /></button>
            </Cluster>
          </TitleBar>
          <Ribbon>
            {["Project", "Map", "Insert", "Analysis", "View", "Edit", "Imagery", "Share"].map((t) => <button key={t}>{t}</button>)}
            <ContextTabs>{["Feature Layer", "Labeling", "Data"].map((t) => <button key={t}>{t}</button>)}</ContextTabs>
          </Ribbon>
          <Workspace>
            <Contents />
            <MapView />
            <Symbology />
          </Workspace>
        </AppWindow>
        <Behind>
          <BehindPart $h={29} />
          <BehindPart $h={29} />
          <BehindPart $h={71} $dark />
          <BehindPart $h={860} />
          <BehindPart $h={22} />
        </Behind>
      </Screen>
      <Desktop />
    </Page>
  );
}
